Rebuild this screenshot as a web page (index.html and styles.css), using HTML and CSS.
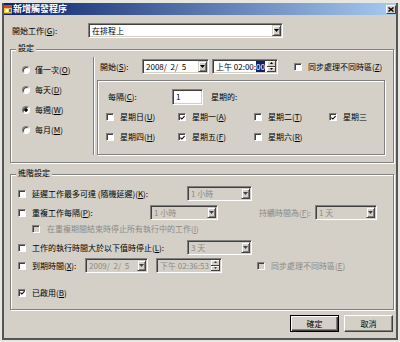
FILE: index.html
```html
<!DOCTYPE html>
<html lang="zh-Hant">
<head>
<meta charset="utf-8">
<title>新增觸發程序</title>
<link rel="stylesheet" href="styles.css">
</head>
<body>
<div class="window">
  <div class="frame">
    <div class="titlebar">
      <svg class="app-icon" viewBox="0 0 8 9" width="8" height="9">
        <rect x="0" y="0.5" width="8" height="8" fill="#f2c23a"/>
        <rect x="0" y="0.5" width="8" height="2.5" fill="#d0462a"/>
        <rect x="1.5" y="4" width="3" height="3" fill="#ffffff"/>
        <rect x="5" y="4" width="2" height="3" fill="#3a6ad0"/>
      </svg>
      <span class="title">新增觸發程序</span>
      <span class="close">
        <svg viewBox="0 0 6 5" width="6" height="5"><path d="M0.5 0.5 L5.5 4.5 M5.5 0.5 L0.5 4.5" stroke="#000" stroke-width="1.4"/></svg>
      </span>
    </div>

    <div class="content">
      <div class="row-begin">
        <span class="lbl-begin">開始工作(<u>G</u>):</span>
        <div class="combo w-begin">
          <span class="val">在排程上</span>
          <span class="drop"><svg viewBox="0 0 5 3" width="5" height="3"><path d="M0 0 H5 L2.5 3 Z" fill="#000"/></svg></span>
        </div>
      </div>

      <div class="group settings">
        <span class="legend">設定</span>
        <div class="settings-body">
          <div class="radios">
            <div class="opt"><span class="radio"></span><span>僅一次(<u>O</u>)</span></div>
            <div class="opt"><span class="radio"></span><span>每天(<u>D</u>)</span></div>
            <div class="opt"><span class="radio on"></span><span>每週(<u>W</u>)</span></div>
            <div class="opt"><span class="radio"></span><span>每月(<u>M</u>)</span></div>
          </div>
          <div class="vsep"></div>
          <div class="right">
            <div class="start-row">
              <span class="lbl-start">開始(<u>S</u>):</span>
              <div class="combo w-date">
                <span class="val">2008/  2/  5</span>
                <span class="drop"><svg viewBox="0 0 5 3" width="5" height="3"><path d="M0 0 H5 L2.5 3 Z" fill="#000"/></svg></span>
              </div>
              <div class="combo w-time gap3">
                <span class="val">上午 02:00:<span class="sel">00</span></span>
                <span class="spin">
                  <span class="sbtn"><svg viewBox="0 0 3 2" width="3" height="2"><path d="M0 2 H3 L1.5 0 Z" fill="#000"/></svg></span>
                  <span class="sbtn"><svg viewBox="0 0 3 2" width="3" height="2"><path d="M0 0 H3 L1.5 2 Z" fill="#000"/></svg></span>
                </span>
              </div>
              <div class="chk gap16"><span class="cb"></span><span>同步處理不同時區(<u>Z</u>)</span></div>
            </div>
            <div class="inner-box">
              <div class="every-row">
                <span class="lbl-every">每隔(<u>C</u>):</span>
                <div class="textbox">1</div>
                <span class="lbl-weeks">星期的:</span>
              </div>
              <div class="days">
                <div class="chk"><span class="cb"></span><span>星期日(<u>U</u>)</span></div>
                <div class="chk"><span class="cb"><svg viewBox="0 0 6 6" width="6" height="6"><path d="M0.5 2.5 L2.2 4.3 L5.5 0.8" stroke="#000" stroke-width="1.3" fill="none"/></svg></span><span>星期一(<u>A</u>)</span></div>
                <div class="chk"><span class="cb"></span><span>星期二(<u>T</u>)</span></div>
                <div class="chk"><span class="cb"><svg viewBox="0 0 6 6" width="6" height="6"><path d="M0.5 2.5 L2.2 4.3 L5.5 0.8" stroke="#000" stroke-width="1.3" fill="none"/></svg></span><span>星期三</span></div>
                <div class="chk"><span class="cb"></span><span>星期四(<u>H</u>)</span></div>
                <div class="chk"><span class="cb"><svg viewBox="0 0 6 6" width="6" height="6"><path d="M0.5 2.5 L2.2 4.3 L5.5 0.8" stroke="#000" stroke-width="1.3" fill="none"/></svg></span><span>星期五(<u>F</u>)</span></div>
                <div class="chk"><span class="cb"></span><span>星期六(<u>R</u>)</span></div>
              </div>
            </div>
          </div>
        </div>
      </div>

      <div class="group advanced">
        <span class="legend">進階設定</span>
        <div class="adv-row r1">
          <div class="chk"><span class="cb"></span><span class="lbl-long">延遲工作最多可達 (隨機延遲)(<u>K</u>):</span></div>
          <div class="combo dis w-65">
            <span class="val">1 小時</span>
            <span class="drop"><svg viewBox="0 0 5 3" width="5" height="3"><path d="M0 0 H5 L2.5 3 Z" fill="#404040"/></svg></span>
          </div>
        </div>
        <div class="adv-row r2">
          <div class="chk"><span class="cb"></span><span class="lbl-repeat">重複工作每隔(<u>P</u>):</span></div>
          <div class="combo dis w-68">
            <span class="val">1 小時</span>
            <span class="drop"><svg viewBox="0 0 5 3" width="5" height="3"><path d="M0 0 H5 L2.5 3 Z" fill="#404040"/></svg></span>
          </div>
          <span class="lbl-dur muted">持續時間為(<u>F</u>):</span>
          <div class="combo dis w-62">
            <span class="val">1 天</span>
            <span class="drop"><svg viewBox="0 0 5 3" width="5" height="3"><path d="M0 0 H5 L2.5 3 Z" fill="#404040"/></svg></span>
          </div>
        </div>
        <div class="adv-row r3">
          <div class="chk"><span class="cb off"></span><span class="muted">在重複期間結束時停止所有執行中的工作(<u>I</u>)</span></div>
        </div>
        <div class="adv-row r4">
          <div class="chk"><span class="cb"></span><span class="lbl-long">工作的執行時間大於以下值時停止(<u>L</u>):</span></div>
          <div class="combo dis w-65">
            <span class="val">3 天</span>
            <span class="drop"><svg viewBox="0 0 5 3" width="5" height="3"><path d="M0 0 H5 L2.5 3 Z" fill="#404040"/></svg></span>
          </div>
        </div>
        <div class="adv-row r5">
          <div class="chk"><span class="cb"></span><span class="lbl-expire">到期時間(<u>X</u>):</span></div>
          <div class="combo dis w-63">
            <span class="val">2009/  2/  5</span>
            <span class="drop"><svg viewBox="0 0 5 3" width="5" height="3"><path d="M0 0 H5 L2.5 3 Z" fill="#404040"/></svg></span>
          </div>
          <div class="combo dis w-66 gap8">
            <span class="val">下午 02:36:53</span>
            <span class="spin">
              <span class="sbtn"><svg viewBox="0 0 3 2" width="3" height="2"><path d="M0 2 H3 L1.5 0 Z" fill="#404040"/></svg></span>
              <span class="sbtn"><svg viewBox="0 0 3 2" width="3" height="2"><path d="M0 0 H3 L1.5 2 Z" fill="#404040"/></svg></span>
            </span>
          </div>
          <div class="chk gap35"><span class="cb off"></span><span class="muted">同步處理不同時區(<u>E</u>)</span></div>
        </div>
        <div class="adv-row r6">
          <div class="chk"><span class="cb"><svg viewBox="0 0 6 6" width="6" height="6"><path d="M0.5 2.5 L2.2 4.3 L5.5 0.8" stroke="#000" stroke-width="1.3" fill="none"/></svg></span><span>已啟用(<u>B</u>)</span></div>
        </div>
      </div>

      <div class="buttons">
        <button class="btn default">確定</button>
        <button class="btn">取消</button>
      </div>
    </div>
  </div>
</div>
</body>
</html>
```
FILE: styles.css
```css
* { box-sizing: border-box; }
html, body { margin: 0; padding: 0; }
body {
  width: 400px;
  height: 342px;
  overflow: hidden;
  font-family: "Noto Sans CJK TC", "Noto Sans", sans-serif;
  font-size: 8px;
  line-height: 10px;
  color: #000;
  background: #e8e6e1;
}
u { text-decoration: underline; text-underline-offset: 1px; }

.window {
  width: 400px;
  height: 342px;
  padding: 3px 2px 2px 2px;
  display: flex;
  background: #e8e6e1;
}
.frame {
  flex: 1;
  display: flex;
  flex-direction: column;
  border: 2px solid #555555;
  border-top: 0;
  background: #d4d0c8;
}

/* title bar */
.titlebar {
  height: 12px;
  display: flex;
  align-items: center;
  background: linear-gradient(to right, #0a246a, #a6caf0);
}
.app-icon { flex: none; margin-right: 1px; }
.title {
  flex: 1;
  color: #fff;
  font-weight: bold;
  font-size: 9px;
  line-height: 12px;
  white-space: nowrap;
}
.close {
  width: 10px;
  height: 9px;
  background: #d4d0c8;
  border: 1px solid;
  border-color: #fff #404040 #404040 #fff;
  display: flex;
  align-items: center;
  justify-content: center;
}

/* content */
.content {
  flex: 1;
  display: flex;
  flex-direction: column;
  padding: 8px 2px 0 6px;
}

.row-begin {
  display: flex;
  align-items: center;
  height: 15px;
  padding-left: 2px;
}
.lbl-begin { width: 76px; flex: none; }

/* combo / inputs */
.combo {
  display: flex;
  flex: none;
  height: 15px;
  padding: 1px;
  background: #fff;
  border: 1px solid;
  border-color: #808080 #fff #fff #808080;
  box-shadow: inset 1px 1px #404040, inset -1px -1px #d4d0c8;
}
.combo .val {
  flex: 1;
  padding-left: 2px;
  line-height: 11px;
  white-space: pre;
  overflow: hidden;
}
.combo.dis { background: #d4d0c8; }
.combo.dis .val { color: #8c8984; }
.drop, .sbtn {
  width: 9px;
  flex: none;
  background: #d4d0c8;
  border: 1px solid;
  border-color: #d4d0c8 #404040 #404040 #d4d0c8;
  box-shadow: inset 1px 1px #fff, inset -1px -1px #808080;
  display: flex;
  align-items: center;
  justify-content: center;
}
.spin { display: flex; flex-direction: column; width: 9px; flex: none; }
.sbtn { flex: 1; width: 9px; border-width: 0 1px 1px 0; box-shadow: inset 1px 1px #fff; }
.sel { background: #0a246a; color: #fff; }

.w-begin { width: 195px; }
.w-date { width: 67px; }
.w-time { width: 66px; }
.w-65 { width: 65px; }
.w-68 { width: 68px; }
.w-62 { width: 62px; }
.w-63 { width: 63px; }
.w-66 { width: 66px; }
.gap3 { margin-left: 3px; }
.gap8 { margin-left: 8px; }
.gap16 { margin-left: 16px; }
.gap35 { margin-left: 35px; }

.textbox {
  width: 31px;
  height: 16px;
  flex: none;
  padding: 2px 3px;
  line-height: 10px;
  background: #fff;
  border: 1px solid;
  border-color: #808080 #fff #fff #808080;
  box-shadow: inset 1px 1px #404040, inset -1px -1px #d4d0c8;
}

/* group boxes */
.group {
  border: 1px solid #808080;
  box-shadow: inset 1px 1px #fff, 1px 1px #fff;
  flex: none;
}
.legend {
  display: block;
  width: max-content;
  margin: -7px 0 0 5px;
  padding: 0 2px;
  background: #d4d0c8;
  line-height: 10px;
}
.settings { height: 114px; margin-top: 11px; }
.settings-body { display: flex; }
.radios { width: 82px; flex: none; padding: 7px 0 0 11px; }
.opt { display: flex; align-items: center; height: 20px; gap: 5px; }
.radio {
  width: 8px;
  height: 8px;
  flex: none;
  border-radius: 50%;
  background: #fff;
  border: 1px solid;
  border-color: #808080 #fff #fff #808080;
  box-shadow: inset 1px 1px #404040;
}
.radio.on { background: radial-gradient(circle, #000 0 1.4px, #fff 2px); }
.vsep {
  width: 2px;
  height: 98px;
  flex: none;
  margin-top: 4px;
  border-left: 1px solid #808080;
  border-right: 1px solid #fff;
}
.right { flex: 1; }
.start-row {
  display: flex;
  align-items: center;
  height: 15px;
  margin-top: 6px;
  padding-left: 5px;
}
.lbl-start { width: 42px; flex: none; }

.inner-box {
  width: 288px;
  height: 75px;
  margin: 6px 0 0 2px;
  border: 1px solid #808080;
  box-shadow: inset 1px 1px #fff, 1px 1px #fff;
}
.every-row {
  display: flex;
  align-items: center;
  height: 16px;
  margin-top: 8px;
  padding-left: 10px;
}
.lbl-every { width: 64px; flex: none; }
.lbl-weeks { margin-left: 8px; }
.days {
  display: grid;
  grid-template-columns: 72px 76px 75px auto;
  grid-auto-rows: 20px;
  margin-top: 2px;
  padding-left: 8px;
}

/* checkbox */
.chk { display: flex; align-items: center; gap: 6px; white-space: nowrap; flex: none; }
.cb {
  width: 8px;
  height: 8px;
  flex: none;
  background: #fff;
  border: 1px solid;
  border-color: #808080 #fff #fff #808080;
  box-shadow: inset 1px 1px #404040;
  display: flex;
  align-items: center;
  justify-content: center;
}
.cb svg { margin: 1px 0 0 1px; }
.cb.off { background: #d4d0c8; }
.muted { color: #8c8984; }

/* advanced */
.advanced { height: 136px; margin-top: 11px; }
.adv-row {
  display: flex;
  align-items: center;
  height: 15px;
  padding-left: 7px;
}
.r1 { margin-top: 8px; }
.r2 { margin-top: 4px; }
.r3 { margin-top: 1px; padding-left: 21px; }
.r3 .chk { gap: 7px; }
.r4 { margin-top: 4px; }
.r5 { margin-top: 3px; }
.r6 { margin-top: 12px; }
.lbl-long { width: 155px; }
.lbl-repeat { width: 118px; }
.lbl-expire { width: 53px; }
.lbl-dur { width: 56px; margin-left: 41px; flex: none; white-space: nowrap; }

/* buttons */
.buttons {
  display: flex;
  justify-content: flex-end;
  gap: 5px;
  margin-top: 5px;
  padding-right: 1px;
}
.btn {
  width: 49px;
  height: 17px;
  padding: 0;
  font: inherit;
  color: #000;
  background: #d4d0c8;
  border: 1px solid;
  border-color: #fff #404040 #404040 #fff;
  box-shadow: inset -1px -1px #808080;
  display: flex;
  align-items: center;
  justify-content: center;
}
.btn.default {
  border-color: #000;
  box-shadow: inset 1px 1px #fff, inset -1px -1px #404040, inset -2px -2px #808080;
}
```
